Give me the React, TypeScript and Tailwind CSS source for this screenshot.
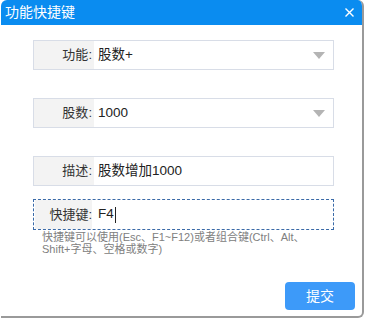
import React from 'react';

const font = { fontFamily: '"Liberation Sans", "Noto Sans CJK SC", sans-serif' };

const Caret = () => (
  <svg width="12" height="7" viewBox="0 0 12 7" className="shrink-0">
    <path d="M0 0 L12 0 L6 7 Z" fill="#b4b4b4" />
  </svg>
);

interface RowProps {
  label: string;
  value: string;
  select?: boolean;
}

const Row: React.FC<RowProps> = ({ label, value, select }) => (
  <div className="flex h-[30px] border border-[#d8dde7] bg-white">
    <div className="w-[60px] bg-[#f3f3f3] flex items-center justify-end pr-[2px] text-[13px] text-[#333]">{label}:</div>
    <div className="flex-1 flex items-center pl-[4px] pr-[8px] text-[13.5px] text-[#222]">
      <span className="flex-1">{value}</span>
      {select && <Caret />}
    </div>
  </div>
);

const App: React.FC = () => {
  return (
    <div className="w-[365px] h-[319px] bg-white" style={font}>
      <div className="ml-[1px] w-[363px] h-[318px] rounded-t-[6px] rounded-br-[6px] bg-white overflow-hidden flex flex-col border-r-2 border-b-2 border-[#9a9a9a]">
        <div className="h-[25px] bg-[#0a8cf0] flex items-center justify-between pl-[4px] pr-[8px]">
          <span className="text-white text-[14px]">功能快捷键</span>
          <svg width="9" height="9" viewBox="0 0 9 9">
            <path d="M0.5 0.5 L8.5 8.5 M8.5 0.5 L0.5 8.5" stroke="#fff" strokeWidth="1.4" />
          </svg>
        </div>
        <div className="pl-[32px] pr-[28px] pt-[15px] flex flex-col">
          <Row label="功能" value="股数+" select />
          <div className="h-[28px]" />
          <Row label="股数" value="1000" select />
          <div className="h-[28px]" />
          <Row label="描述" value="股数增加1000" />
          <div className="h-[13px]" />
          <div className="flex h-[31px] border border-dashed border-[#3a6aa8] bg-white">
            <div className="w-[60px] flex items-center justify-end pr-[2px] text-[13px] text-[#333]">
              <span className="bg-[#f3f3f3] pl-[14px] py-[5px]">快捷键:</span>
            </div>
            <div className="flex-1 flex items-center pl-[4px] text-[13.5px] text-[#222]">
              F4<span className="inline-block w-[1px] h-[16px] bg-[#222] ml-[1px]" />
            </div>
          </div>
          <div className="mt-[1px] pl-[9px] text-[11px] leading-[12px] text-[#808080]">
            快捷键可以使用(Esc、F1~F12)或者组合键(Ctrl、Alt、
            <br />
            Shift+字母、空格或数字)
          </div>
        </div>
        <div className="flex-1" />
        <div className="flex justify-end pr-[7px] pb-[6px]">
          <button className="w-[70px] h-[28px] rounded-[4px] bg-[#3d9af9] text-white text-[14px]">提交</button>
        </div>
      </div>
    </div>
  );
};

export default App;
